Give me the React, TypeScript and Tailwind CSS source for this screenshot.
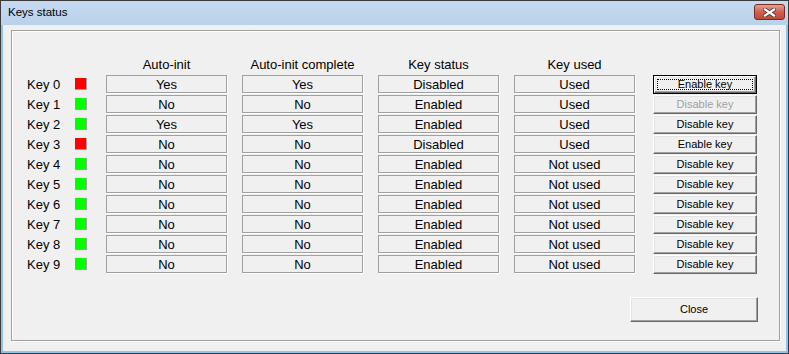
import React from "react";

type Row = { on: boolean; auto: string; done: string; status: string; used: string; action: string };

const ROWS: Row[] = [
  { on: false, auto: "Yes", done: "Yes", status: "Disabled", used: "Used", action: "Enable key" },
  { on: true, auto: "No", done: "No", status: "Enabled", used: "Used", action: "Disable key" },
  { on: true, auto: "Yes", done: "Yes", status: "Enabled", used: "Used", action: "Disable key" },
  { on: false, auto: "No", done: "No", status: "Disabled", used: "Used", action: "Enable key" },
  { on: true, auto: "No", done: "No", status: "Enabled", used: "Not used", action: "Disable key" },
  { on: true, auto: "No", done: "No", status: "Enabled", used: "Not used", action: "Disable key" },
  { on: true, auto: "No", done: "No", status: "Enabled", used: "Not used", action: "Disable key" },
  { on: true, auto: "No", done: "No", status: "Enabled", used: "Not used", action: "Disable key" },
  { on: true, auto: "No", done: "No", status: "Enabled", used: "Not used", action: "Disable key" },
  { on: true, auto: "No", done: "No", status: "Enabled", used: "Not used", action: "Disable key" },
];

const FONT = { fontFamily: '"Liberation Sans", Arial, sans-serif' };

function Field({ text }: { text: string }) {
  return (
    <div className="w-[121px] h-[18px] flex items-center justify-center border border-[#a0a0a0] shadow-[1px_1px_0_#fff] text-[13px] leading-none text-black">
      {text}
    </div>
  );
}

function WinButton({
  label,
  isDefault,
  disabled,
  className,
}: {
  label: string;
  isDefault?: boolean;
  disabled?: boolean;
  className: string;
}) {
  const face = (
    <div className="relative w-full h-full flex items-center justify-center bg-[#f0f0f0] border border-t-white border-l-white border-b-[#696969] border-r-[#696969] shadow-[inset_-1px_-1px_0_#a0a0a0,inset_1px_1px_0_#e3e3e3]">
      <span className={`text-[11px] leading-none ${disabled ? "text-[#a0a0a0]" : "text-black"}`}>{label}</span>
      {isDefault && <div className="absolute inset-[2px] border border-dotted border-black" />}
    </div>
  );
  if (isDefault) {
    return <div className={`${className} border border-black`}>{face}</div>;
  }
  return <div className={className}>{face}</div>;
}

export default function App() {
  return (
    <div
      className="w-[789px] h-[354px] flex flex-col bg-[#8fc3ea] border border-[#3b3b3b] overflow-hidden"
      style={FONT}
    >
      {/* title bar */}
      <div className="h-[24px] shrink-0 flex items-center justify-between bg-gradient-to-b from-[#c6dbf0] to-[#b9d1ea] pl-[7px] pr-[3px]">
        <span className="text-[11.5px] text-black">Keys status</span>
        <div className="w-[31px] h-[16px] mt-[-2px] rounded-[3px] border border-[#7a2b20] bg-gradient-to-b from-[#e6a090] via-[#d0604e] to-[#c14a37] flex items-center justify-center">
          <svg width="13" height="9" viewBox="0 0 13 9">
            <path d="M2 1.5 L11 7.5 M11 1.5 L2 7.5" stroke="#5a3a36" strokeWidth="4" strokeLinecap="square" />
            <path d="M2 1.5 L11 7.5 M11 1.5 L2 7.5" stroke="#ffffff" strokeWidth="2.2" strokeLinecap="square" />
          </svg>
        </div>
      </div>

      {/* client area */}
      <div className="flex-1 mx-[2px] mb-[2px] bg-[#f0f0f0] pl-[8px] pr-[6px] pt-[5px] pb-[10px]">
        <div className="h-full border border-[#a0a0a0] shadow-[inset_1px_1px_0_#fff,1px_1px_0_#fff] pt-[26px] pl-[15px] pr-[20px]">
          {/* headers */}
          <div className="flex h-[14px] items-center text-[13px] leading-none text-black mb-[3px]">
            <div className="w-[79px]" />
            <div className="w-[121px] text-center">Auto-init</div>
            <div className="w-[121px] ml-[15px] text-center">Auto-init complete</div>
            <div className="w-[121px] ml-[15px] text-center">Key status</div>
            <div className="w-[121px] ml-[15px] text-center">Key used</div>
          </div>

          {ROWS.map((r, i) => (
            <div key={i} className="flex items-center h-[20px]">
              <div className="w-[48px] text-[13px] leading-none text-black">Key {i}</div>
              <div
                className={`w-[12px] h-[12px] border-r border-b border-[#a0a0a0] ${r.on ? "bg-[#00ff00]" : "bg-[#ff0000]"}`}
              />
              <div className="w-[19px]" />
              <Field text={r.auto} />
              <div className="w-[15px]" />
              <Field text={r.done} />
              <div className="w-[15px]" />
              <Field text={r.status} />
              <div className="w-[15px]" />
              <Field text={r.used} />
              <div className="w-[18px]" />
              <WinButton
                label={r.action}
                isDefault={i === 0}
                disabled={i === 1}
                className="w-[104px] h-[19px]"
              />
            </div>
          ))}

          <div className="flex justify-end mt-[23px] mr-[1px]">
            <WinButton label="Close" className="w-[128px] h-[25px]" />
          </div>
        </div>
      </div>
    </div>
  );
}
